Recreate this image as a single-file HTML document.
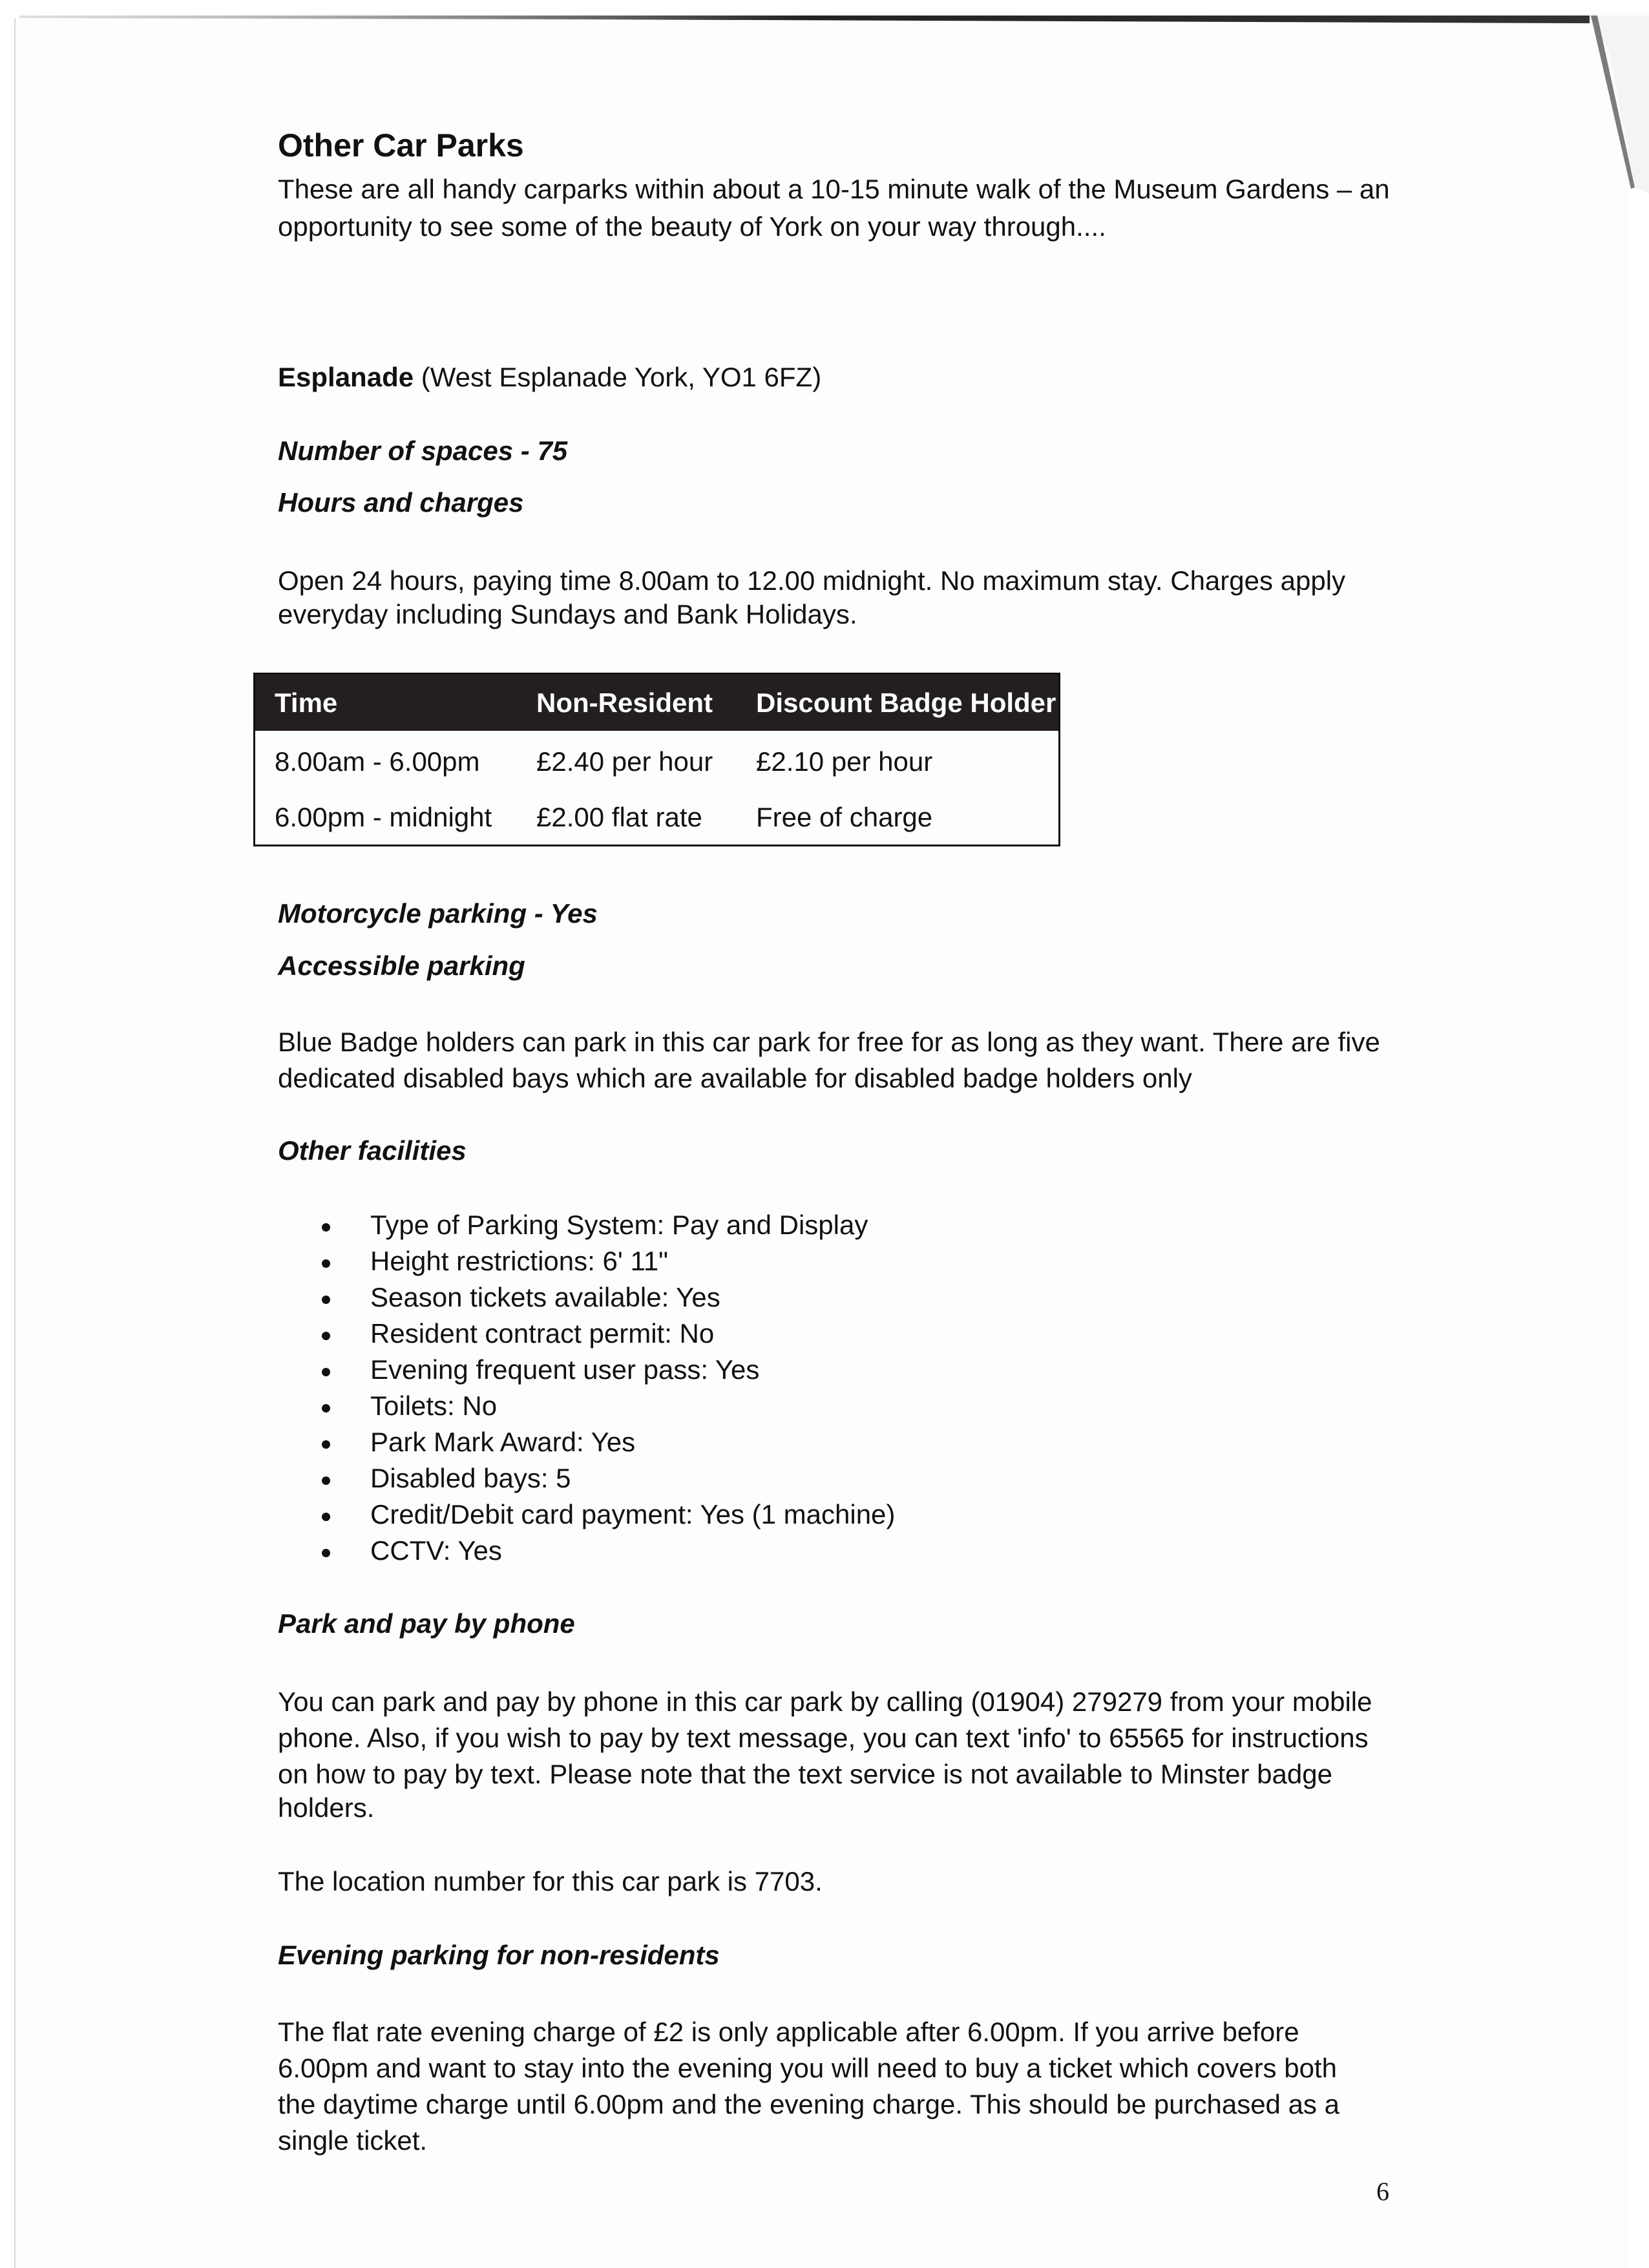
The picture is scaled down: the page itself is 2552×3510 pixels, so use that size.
<!DOCTYPE html>
<html><head><meta charset="utf-8">
<style>
html,body{margin:0;padding:0}
body{width:2552px;height:3510px;position:relative;background:#fff;overflow:hidden;font-family:"Liberation Sans",sans-serif;color:#111}
.page{position:absolute;left:22px;top:28px;right:30px;bottom:0;background:#fcfefe;border-left:2px solid #d8d8d8}
.l{position:absolute;left:430px;font-size:42px;line-height:42px;white-space:nowrap}
.h{font-weight:bold;font-style:italic}
.b{font-weight:bold}
.li{position:absolute;left:573px;font-size:42px;line-height:42px;white-space:nowrap}
.dot{position:absolute;left:498px;width:13px;height:13px;border-radius:50%;background:#111}
table{position:absolute;left:392px;top:1041px;width:1249px;border-collapse:collapse;border:3px solid #111;font-size:42px}
td{padding:0 0 0 30px;white-space:nowrap}
th{background:#231f20;color:#fff;text-align:left;padding:0 0 0 30px;height:87px;font-weight:bold}
</style></head><body>
<div class="page"></div>
<svg style="position:absolute;left:0;top:0" width="2552" height="300">
<defs><linearGradient id="g" x1="0" x2="1"><stop offset="0" stop-color="#999" stop-opacity="0.3"/><stop offset="0.5" stop-color="#222"/><stop offset="1" stop-color="#333"/></linearGradient></defs>
<polygon points="30,24 2460,24 2460,36 900,30 30,28" fill="url(#g)"/>
<polygon points="2460,24 2552,24 2552,300 2530,290 2490,80" fill="#f4f4f4"/>
<polygon points="2462,24 2472,24 2530,290 2524,292" fill="#444" opacity="0.7"/>
</svg>
<div class="l b" style="font-size:50px;line-height:50px;top:200px">Other Car Parks</div>
<div class="l" style="top:272px">These are all handy carparks within about a 10-15 minute walk of the Museum Gardens – an</div>
<div class="l" style="top:330px">opportunity to see some of the beauty of York on your way through....</div>
<div class="l" style="top:563px"><b>Esplanade</b> (West Esplanade York, YO1 6FZ)</div>
<div class="l h" style="top:677px">Number of spaces - 75</div>
<div class="l h" style="top:757px">Hours and charges</div>
<div class="l" style="top:878px">Open 24 hours, paying time 8.00am to 12.00 midnight. No maximum stay. Charges apply</div>
<div class="l" style="top:930px">everyday including Sundays and Bank Holidays.</div>
<table>
<tr><th style="width:375px">Time</th><th style="width:310px">Non-Resident</th><th>Discount Badge Holder</th></tr>
<tr><td style="height:88px;padding-top:4px">8.00am - 6.00pm</td><td style="padding-top:4px">£2.40 per hour</td><td style="padding-top:4px">£2.10 per hour</td></tr>
<tr><td style="height:84px">6.00pm - midnight</td><td>£2.00 flat rate</td><td>Free of charge</td></tr>
</table>
<div class="l h" style="top:1393px">Motorcycle parking - Yes</div>
<div class="l h" style="top:1474px">Accessible parking</div>
<div class="l" style="top:1592px">Blue Badge holders can park in this car park for free for as long as they want. There are five</div>
<div class="l" style="top:1648px">dedicated disabled bays which are available for disabled badge holders only</div>
<div class="l h" style="top:1760px">Other facilities</div>
<div class="dot" style="top:1893px"></div><div class="li" style="top:1875px">Type of Parking System: Pay and Display</div>
<div class="dot" style="top:1949px"></div><div class="li" style="top:1931px">Height restrictions: 6' 11"</div>
<div class="dot" style="top:2005px"></div><div class="li" style="top:1987px">Season tickets available: Yes</div>
<div class="dot" style="top:2061px"></div><div class="li" style="top:2043px">Resident contract permit: No</div>
<div class="dot" style="top:2117px"></div><div class="li" style="top:2099px">Evening frequent user pass: Yes</div>
<div class="dot" style="top:2173px"></div><div class="li" style="top:2155px">Toilets: No</div>
<div class="dot" style="top:2229px"></div><div class="li" style="top:2211px">Park Mark Award: Yes</div>
<div class="dot" style="top:2285px"></div><div class="li" style="top:2267px">Disabled bays: 5</div>
<div class="dot" style="top:2341px"></div><div class="li" style="top:2323px">Credit/Debit card payment: Yes (1 machine)</div>
<div class="dot" style="top:2397px"></div><div class="li" style="top:2379px">CCTV: Yes</div>
<div class="l h" style="top:2492px">Park and pay by phone</div>
<div class="l" style="top:2613px">You can park and pay by phone in this car park by calling (01904) 279279 from your mobile</div>
<div class="l" style="top:2669px">phone. Also, if you wish to pay by text message, you can text 'info' to 65565 for instructions</div>
<div class="l" style="top:2725px">on how to pay by text. Please note that the text service is not available to Minster badge</div>
<div class="l" style="top:2777px">holders.</div>
<div class="l" style="top:2891px">The location number for this car park is 7703.</div>
<div class="l h" style="top:3005px">Evening parking for non-residents</div>
<div class="l" style="top:3124px">The flat rate evening charge of £2 is only applicable after 6.00pm. If you arrive before</div>
<div class="l" style="top:3180px">6.00pm and want to stay into the evening you will need to buy a ticket which covers both</div>
<div class="l" style="top:3236px">the daytime charge until 6.00pm and the evening charge. This should be purchased as a</div>
<div class="l" style="top:3292px">single ticket.</div>
<div style="position:absolute;left:2130px;top:3368px;font-family:'Liberation Serif',serif;font-size:40px">6</div>
</body></html>
